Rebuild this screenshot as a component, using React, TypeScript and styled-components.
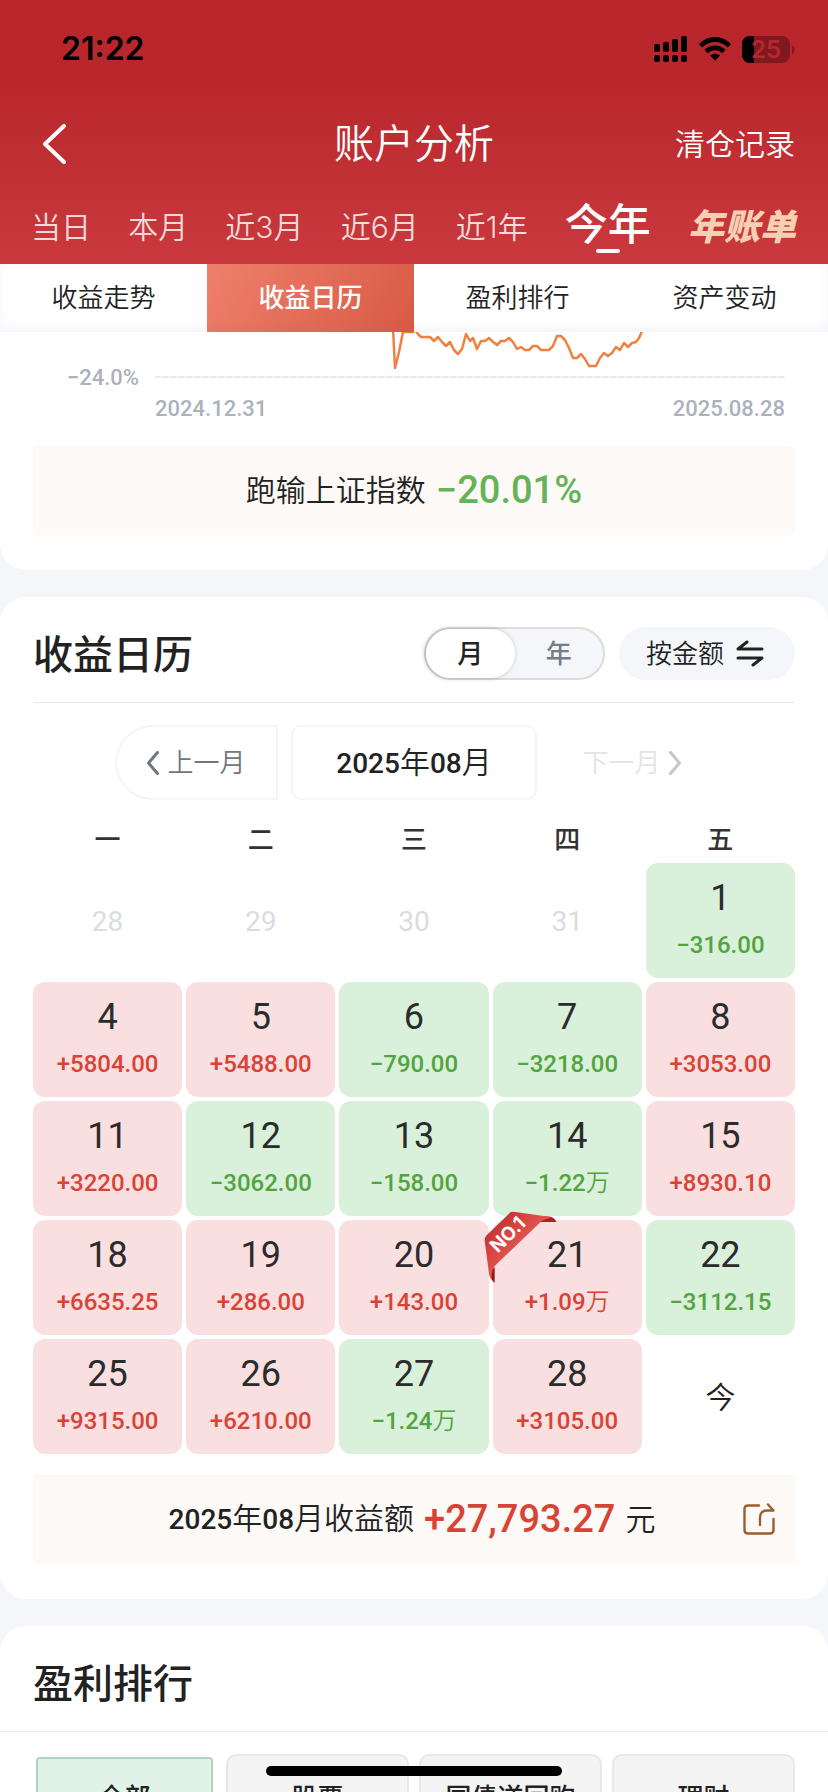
import React from "react";
import styled, { createGlobalStyle, css } from "styled-components";

const GlobalStyle = createGlobalStyle`
  *, *::before, *::after { box-sizing: border-box; }
  html, body, #root { height: 100%; }
  body {
    margin: 0;
    overflow: hidden;
    background: #f4f6fa;
    color: #222;
    font-family: Inter, "Noto Sans CJK SC", sans-serif;
    font-weight: 350;
  }
  button { font: inherit; color: inherit; border: 0; padding: 0; background: none; cursor: pointer; }
  a { color: inherit; text-decoration: none; }
  h1, h2, p { margin: 0; }
`;

const Screen = styled.div`
  position: relative;
  height: 100vh;
  overflow: hidden;
`;

const Header = styled.header`
  background: linear-gradient(#b8262c 0%, #b9272d 30%, #c9393d 100%);
  color: #fff;
`;

const StatusBar = styled.div`
  display: flex;
  align-items: center;
  justify-content: space-between;
  height: 98px;
  padding: 0 33px 0 61px;
  color: #000;
`;

const Clock = styled.time`
  font-size: 32px;
  line-height: 40px;
  font-weight: 600;
`;

const StatusIcons = styled.div`
  display: flex;
  align-items: center;
  gap: 11px;
`;

const NavBar = styled.nav`
  display: grid;
  grid-template-columns: 1fr auto 1fr;
  align-items: center;
  height: 92px;
  padding: 0 33px;
`;

const BackButton = styled.button`
  justify-self: start;
  display: flex;
  padding-left: 10px;
`;

const PageTitle = styled.h1`
  font-size: 40px;
  line-height: 48px;
  font-weight: 350;
`;

const RecordsLink = styled.a`
  justify-self: end;
  font-size: 30px;
  line-height: 40px;
`;

const Periods = styled.div`
  display: flex;
  align-items: center;
  justify-content: space-between;
  height: 74px;
  padding: 0 32px 0 31px;
`;

const Period = styled.button<{ $active?: boolean }>`
  position: relative;
  font-size: 30px;
  line-height: 40px;
  color: rgba(255, 255, 255, 0.82);
  white-space: nowrap;
  ${(p) =>
    p.$active &&
    css`
      padding-bottom: 6px;
      font-size: 43px;
      line-height: 54px;
      font-weight: 500;
      color: #fff;
      &::after {
        content: "";
        position: absolute;
        left: 50%;
        bottom: 4px;
        width: 24px;
        height: 4px;
        margin-left: -12px;
        border-radius: 2px;
        background: #fff;
      }
    `}
`;

const BillLink = styled.a`
  font-size: 36px;
  line-height: 40px;
  font-weight: 900;
  font-style: italic;
  color: #f7d0b4;
`;

const SectionTabs = styled.div`
  position: relative;
  display: grid;
  grid-template-columns: repeat(4, 1fr);
  height: 68px;
  background: #fff;
  &::after {
    content: "";
    position: absolute;
    inset: 0;
    pointer-events: none;
    box-shadow: inset 0 -4px 10px rgba(110, 120, 190, 0.08);
  }
`;

const SectionTab = styled.button<{ $active?: boolean }>`
  font-size: 26px;
  line-height: 36px;
  ${(p) =>
    p.$active &&
    css`
      color: #fff;
      font-weight: 500;
      background: linear-gradient(120deg, #ee806c, #d85a44);
    `}
`;

const Card = styled.section<{ $first?: boolean }>`
  margin-bottom: 27px;
  padding: 0 33px 35px;
  border-radius: ${(p) => (p.$first ? "0 0 26px 26px" : "26px")};
  background: #fff;
`;

const ChartArea = styled.div`
  display: grid;
  grid-template-columns: 106px 1fr;
  column-gap: 16px;
  padding-right: 10px;
  height: 114px;
  font-family: Roboto, sans-serif;
  font-size: 22px;
  line-height: 30px;
  font-weight: 500;
  color: #adb1bb;
`;

const AxisLabel = styled.span`
  align-self: start;
  justify-self: end;
  margin-top: 31px;
`;

const Plot = styled.div`
  svg { display: block; width: 100%; height: 60px; }
`;

const Dates = styled.div`
  display: flex;
  justify-content: space-between;
  margin-top: 2px;
`;

const Banner = styled.div<{ $action?: boolean }>`
  display: grid;
  grid-template-columns: ${(p) => (p.$action ? "32px" : "36px")} 1fr 36px;
  align-items: center;
  height: 89px;
  padding: 0 18px 2px;
  border-radius: 4px;
  background: #fdf9f6;
`;

const BannerText = styled.p`
  grid-column: 2;
  display: flex;
  align-items: center;
  justify-content: center;
  gap: 10px;
  font-size: 30px;
  line-height: 44px;
`;

const BannerValue = styled.strong<{ $up?: boolean }>`
  font-family: Roboto, sans-serif;
  font-size: 38px;
  line-height: 44px;
  font-weight: 500;
  color: ${(p) => (p.$up ? "#d84335" : "#64b457")};
`;

const Num = styled.span`
  font-family: Roboto, sans-serif;
  font-size: 28px;
  font-weight: 500;
`;

const CardHead = styled.div<{ $bleed?: boolean }>`
  display: flex;
  align-items: center;
  gap: 14px;
  height: 106px;
  padding-top: 8px;
  border-bottom: 1px solid #e6e7ec;
  ${(p) => p.$bleed && css`margin: 0 -33px; padding-left: 33px; padding-right: 33px;`}
`;

const CardTitle = styled.h2`
  flex: 1;
  padding-top: 2px;
  font-size: 40px;
  line-height: 48px;
  font-weight: 500;
`;

const Segment = styled.div`
  display: grid;
  grid-template-columns: 1fr 1fr;
  width: 181px;
  height: 53px;
  border: 2px solid #dcdcdc;
  border-radius: 27px;
  background: #f4f6fa;
`;

const SegmentButton = styled.button<{ $active?: boolean }>`
  border-radius: 27px;
  font-size: 26px;
  line-height: 36px;
  font-weight: 500;
  color: #767c88;
  ${(p) =>
    p.$active &&
    css`
      color: #222;
      background: #fff;
      box-shadow: -1px 0 5px rgba(0, 0, 0, 0.25);
    `}
`;

const AmountButton = styled.button`
  display: flex;
  align-items: center;
  justify-content: center;
  gap: 12px;
  width: 176px;
  height: 53px;
  padding-right: 4px;
  border-radius: 27px;
  background: #f4f6fa;
  font-size: 26px;
  line-height: 36px;
`;

const MonthNav = styled.div`
  display: grid;
  grid-template-columns: 163px 246px 163px;
  justify-content: center;
  column-gap: 13px;
  height: 75px;
  margin-top: 22px;
`;

const MonthStep = styled.button<{ $side: "prev" | "next" }>`
  display: flex;
  align-items: center;
  justify-content: center;
  gap: 8px;
  font-size: 26px;
  line-height: 36px;
  ${(p) =>
    p.$side === "prev"
      ? css`
          border: 2px solid #f4f5fa;
          border-radius: 38px 2px 2px 38px;
          color: #6f7681;
        `
      : css`
          color: #e4e4e4;
          svg { color: #c6c6c6; }
        `}
`;

const CurrentMonth = styled.button`
  border: 2px solid #f4f5fa;
  border-radius: 10px;
  font-size: 30px;
  line-height: 40px;
`;

const Calendar = styled.table`
  width: calc(100% + 8px);
  margin: 17px -4px;
  border-spacing: 4px;
  table-layout: fixed;
  text-align: center;
`;

const Weekday = styled.th`
  height: 38px;
  padding: 0;
  font-size: 26px;
  line-height: 36px;
  font-weight: 500;
  color: #333;
`;

type Tone = "up" | "down" | "none";

const DayCell = styled.td<{ $tone: Tone }>`
  position: relative;
  height: 115px;
  padding: 2px 0 0;
  border-radius: 12px;
  background: ${(p) => ({ up: "#fadfe0", down: "#d9f0db", none: "transparent" })[p.$tone]};
  color: ${(p) => ({ up: "#d84335", down: "#52a43e", none: "#dadce1" })[p.$tone]};
  font-family: Roboto, "Noto Sans CJK SC", sans-serif;
`;

const DayNumber = styled.div`
  font-size: 36px;
  line-height: 46px;
  font-weight: 400;
  color: #2b2b2b;
`;

const DayValue = styled.div`
  font-size: 24px;
  line-height: 48px;
  font-weight: 500;
`;

const Unit = styled.span`
  font-weight: 350;
`;

const MutedDay = styled.span`
  font-size: 28px;
  line-height: 40px;
  font-weight: 400;
`;

const TodayMark = styled.span`
  font-size: 30px;
  line-height: 40px;
  color: #222;
`;

const Ribbon = styled.svg`
  position: absolute;
  left: -11px;
  top: -10px;
  width: 77px;
  height: 75px;
`;

const ShareButton = styled.button`
  grid-column: 3;
  display: flex;
  justify-content: center;
`;

const Filters = styled.div`
  display: grid;
  grid-template-columns: repeat(4, 1fr);
  column-gap: 10px;
  margin-top: 22px;
`;

const Filter = styled.button<{ $active?: boolean }>`
  height: ${(p) => (p.$active ? "82px" : "88px")};
  border: 2px solid ${(p) => (p.$active ? "#b0d4c3" : "#e8e8e8")};
  border-radius: ${(p) => (p.$active ? "4px" : "10px")};
  background: ${(p) => (p.$active ? "#e1f3e7" : "#f4f4f4")};
  margin: ${(p) => (p.$active ? "3px" : "0")};
  font-size: 26px;
  line-height: 36px;
  font-weight: 500;
`;

const HomeIndicator = styled.div`
  position: absolute;
  left: 50%;
  bottom: 16px;
  width: 296px;
  height: 10px;
  margin-left: -148px;
  border-radius: 5px;
  background: #000;
`;

const SignalIcon = () => (
  <svg width="34" height="27" viewBox="0 0 34 27" aria-hidden="true">
    <rect x="0" y="8" width="6" height="8" rx="2" />
    <rect x="9" y="6" width="6" height="10" rx="2" />
    <rect x="18" y="3" width="6" height="13" rx="2" />
    <rect x="27" y="0" width="6" height="16" rx="2" />
    <rect x="0" y="19" width="6" height="7" rx="2" />
    <rect x="9" y="19" width="6" height="7" rx="2" />
    <rect x="18" y="19" width="6" height="7" rx="2" />
    <rect x="27" y="19" width="6" height="7" rx="2" />
  </svg>
);

const WifiIcon = () => (
  <svg width="32" height="24" viewBox="0 0 32 24" aria-hidden="true">
    <path d="M0 7.2C9 -2.4 23 -2.4 32 7.2L28.8 10.6C21.5 3.2 10.500 3.2 3.200 10.600Z" />
    <path d="M5.400 12.800C11.500 7 20.500 7 26.600 12.800L23.300 16.200C19 12.200 13 12.200 8.700 16.200Z" />
    <path d="M11 18.500C14 16.200 18 16.200 21 18.500L16 23.800Z" />
  </svg>
);

const BatteryIcon = () => (
  <svg width="53" height="27" viewBox="0 0 53 27" role="img" aria-label="25">
    <defs>
      <clipPath id="battery-body"><rect width="48" height="27" rx="8" /></clipPath>
    </defs>
    <g clipPath="url(#battery-body)">
      <rect width="48" height="27" fill="#80191f" />
      <rect width="12" height="27" />
    </g>
    <path d="M50 9.500C53.500 10.500 53.500 17 50 18Z" fill="#80191f" />
    <text x="24" y="22" textAnchor="middle" fontFamily="Inter, sans-serif" fontSize="24" fontWeight="600" fill="#b9282e">25</text>
  </svg>
);

const Chevron = ({ dir, w, h, stroke }: { dir: "left" | "right"; w: number; h: number; stroke: number }) => {
  const a = stroke / 2;
  const points =
    dir === "left"
      ? `${w - a},${a} ${a},${h / 2} ${w - a},${h - a}`
      : `${a},${a} ${w - a},${h / 2} ${a},${h - a}`;
  return (
    <svg width={w} height={h} viewBox={`0 0 ${w} ${h}`} fill="none" stroke="currentColor" strokeWidth={stroke} strokeLinecap="round" strokeLinejoin="round" aria-hidden="true">
      <polyline points={points} />
    </svg>
  );
};

const SwapIcon = () => (
  <svg width="28" height="27" viewBox="0 0 28 27" fill="none" stroke="#222" strokeWidth="3" strokeLinecap="round" strokeLinejoin="round" aria-hidden="true">
    <path d="M26 9H2L11 2" />
    <path d="M2 18H26L17 25" />
  </svg>
);

const ShareIcon = () => (
  <svg width="32" height="32" viewBox="0 0 32 32" fill="none" stroke="#9a5f2e" strokeWidth="2.4" strokeLinecap="round" strokeLinejoin="round" aria-hidden="true">
    <path d="M16 2.500H5Q1.500 2.500 1.500 6V27Q1.500 30.500 5 30.500H27Q30.500 30.500 30.500 27V16" />
    <path d="M17 22V15Q17 7.500 24 7.500H30.500L25 1.500" />
  </svg>
);

const TopRibbon = () => (
  <Ribbon viewBox="205 90 231 225" role="img" aria-label="NO.1">
    <defs>
      <linearGradient id="ribbon-face" x1="0" y1="0" x2="1" y2="1">
        <stop offset="0.1" stopColor="#b8302e" />
        <stop offset="0.35" stopColor="#d9443f" />
        <stop offset="0.6" stopColor="#e0605a" />
      </linearGradient>
    </defs>
    <path d="M372 126L385 108L410 110Q424 114 428 126Z" fill="#a8221f" />
    <path d="M226 275L243 262L243 308Q229 298 226 275Z" fill="#8f1a18" />
    <path d="M290 97Q297 94 310 97L412 111L385 122L243 258Q232 275 234 300Q226 292 224 265L213 182Q213 172 219 166Z" fill="url(#ribbon-face)" />
    <text transform="translate(252 221) rotate(-45)" fontFamily="Inter, sans-serif" fontSize="57" fontWeight="700" fill="#fff">NO.1</text>
  </Ribbon>
);

const CHART_LINE =
  "M238 -4L240 36L244 20L248 0L258 0L259 -3L263 2L266 5L275 5L279 9L283 5L287 10L291 14L295 10L299 18L303 22L307 17L311 2L315 9L318 6L322 17L326 9L330 9L334 6L338 10L342 13L346 9L350 9L354 6L358 10L362 17L366 15L370 18L374 18L378 14L382 14L386 18L394 18L398 14L402 4L406 4L410 8L414 16L418 26L422 26L426 22L430 27L434 34L441 34L445 26L449 21L453 24L457 21L461 15L465 18L469 11L473 15L477 11L481 10L484 6L488 -3";

type Day = { day: string; value?: string; unit?: string; top?: boolean };

const WEEKS: Day[][] = [
  [{ day: "28" }, { day: "29" }, { day: "30" }, { day: "31" }, { day: "1", value: "−316.00" }],
  [
    { day: "4", value: "+5804.00" },
    { day: "5", value: "+5488.00" },
    { day: "6", value: "−790.00" },
    { day: "7", value: "−3218.00" },
    { day: "8", value: "+3053.00" },
  ],
  [
    { day: "11", value: "+3220.00" },
    { day: "12", value: "−3062.00" },
    { day: "13", value: "−158.00" },
    { day: "14", value: "−1.22", unit: "万" },
    { day: "15", value: "+8930.10" },
  ],
  [
    { day: "18", value: "+6635.25" },
    { day: "19", value: "+286.00" },
    { day: "20", value: "+143.00" },
    { day: "21", value: "+1.09", unit: "万", top: true },
    { day: "22", value: "−3112.15" },
  ],
  [
    { day: "25", value: "+9315.00" },
    { day: "26", value: "+6210.00" },
    { day: "27", value: "−1.24", unit: "万" },
    { day: "28", value: "+3105.00" },
    { day: "今" },
  ],
];

const CalendarDay = ({ day, value, unit, top }: Day) => {
  if (!value) {
    return (
      <DayCell $tone="none">
        {day === "今" ? <TodayMark>{day}</TodayMark> : <MutedDay>{day}</MutedDay>}
      </DayCell>
    );
  }
  return (
    <DayCell $tone={value.startsWith("+") ? "up" : "down"}>
      <DayNumber>{day}</DayNumber>
      <DayValue>
        {value}
        {unit && <Unit>{unit}</Unit>}
      </DayValue>
      {top && <TopRibbon />}
    </DayCell>
  );
};

export default function App() {
  return (
    <>
      <GlobalStyle />
      <Screen>
        <Header>
          <StatusBar>
            <Clock>21:22</Clock>
            <StatusIcons>
              <SignalIcon />
              <WifiIcon />
              <BatteryIcon />
            </StatusIcons>
          </StatusBar>
          <NavBar>
            <BackButton aria-label="返回">
              <Chevron dir="left" w={23} h={40} stroke={4} />
            </BackButton>
            <PageTitle>账户分析</PageTitle>
            <RecordsLink href="#records">清仓记录</RecordsLink>
          </NavBar>
          <Periods>
            {["当日", "本月", "近3月", "近6月", "近1年", "今年"].map((name) => (
              <Period key={name} $active={name === "今年"}>{name}</Period>
            ))}
            <BillLink href="#bill">年账单</BillLink>
          </Periods>
        </Header>

        <SectionTabs>
          {["收益走势", "收益日历", "盈利排行", "资产变动"].map((name) => (
            <SectionTab key={name} $active={name === "收益日历"}>{name}</SectionTab>
          ))}
        </SectionTabs>

        <main>
          <Card $first>
            <ChartArea>
              <AxisLabel>−24.0%</AxisLabel>
              <Plot>
                <svg viewBox="0 0 630 60" preserveAspectRatio="none" aria-hidden="true">
                  <line x1="0" y1="45" x2="630" y2="45" stroke="#f2f2f3" strokeWidth="2" />
                  <line x1="0" y1="45" x2="630" y2="45" stroke="#e9e9eb" strokeWidth="2" strokeDasharray="5 3" />
                  <path d={CHART_LINE} fill="none" stroke="#f08040" strokeWidth="2.5" strokeLinejoin="round" />
                </svg>
                <Dates>
                  <span>2024.12.31</span>
                  <span>2025.08.28</span>
                </Dates>
              </Plot>
            </ChartArea>
            <Banner>
              <BannerText>
                <span>跑输上证指数</span>
                <BannerValue>−20.01%</BannerValue>
              </BannerText>
            </Banner>
          </Card>

          <Card>
            <CardHead>
              <CardTitle>收益日历</CardTitle>
              <Segment>
                <SegmentButton $active>月</SegmentButton>
                <SegmentButton>年</SegmentButton>
              </Segment>
              <AmountButton>
                按金额
                <SwapIcon />
              </AmountButton>
            </CardHead>
            <MonthNav>
              <MonthStep $side="prev">
                <Chevron dir="left" w={12} h={24} stroke={3} />
                上一月
              </MonthStep>
              <CurrentMonth>
                <Num>2025</Num>年<Num>08</Num>月
              </CurrentMonth>
              <MonthStep $side="next">
                下一月
                <Chevron dir="right" w={12} h={24} stroke={3} />
              </MonthStep>
            </MonthNav>
            <Calendar>
              <thead>
                <tr>
                  {["一", "二", "三", "四", "五"].map((name) => (
                    <Weekday key={name} scope="col">{name}</Weekday>
                  ))}
                </tr>
              </thead>
              <tbody>
                {WEEKS.map((week) => (
                  <tr key={week[0].day}>
                    {week.map((d) => (
                      <CalendarDay key={d.day} {...d} />
                    ))}
                  </tr>
                ))}
              </tbody>
            </Calendar>
            <Banner $action>
              <BannerText>
                <span>
                  <Num>2025</Num>年<Num>08</Num>月收益额
                </span>
                <BannerValue $up>+27,793.27</BannerValue>
                <span>元</span>
              </BannerText>
              <ShareButton aria-label="分享">
                <ShareIcon />
              </ShareButton>
            </Banner>
          </Card>

          <Card>
            <CardHead $bleed>
              <CardTitle>盈利排行</CardTitle>
            </CardHead>
            <Filters>
              {["全部", "股票", "国债逆回购", "理财"].map((name) => (
                <Filter key={name} $active={name === "全部"}>{name}</Filter>
              ))}
            </Filters>
          </Card>
        </main>
        <HomeIndicator />
      </Screen>
    </>
  );
}
